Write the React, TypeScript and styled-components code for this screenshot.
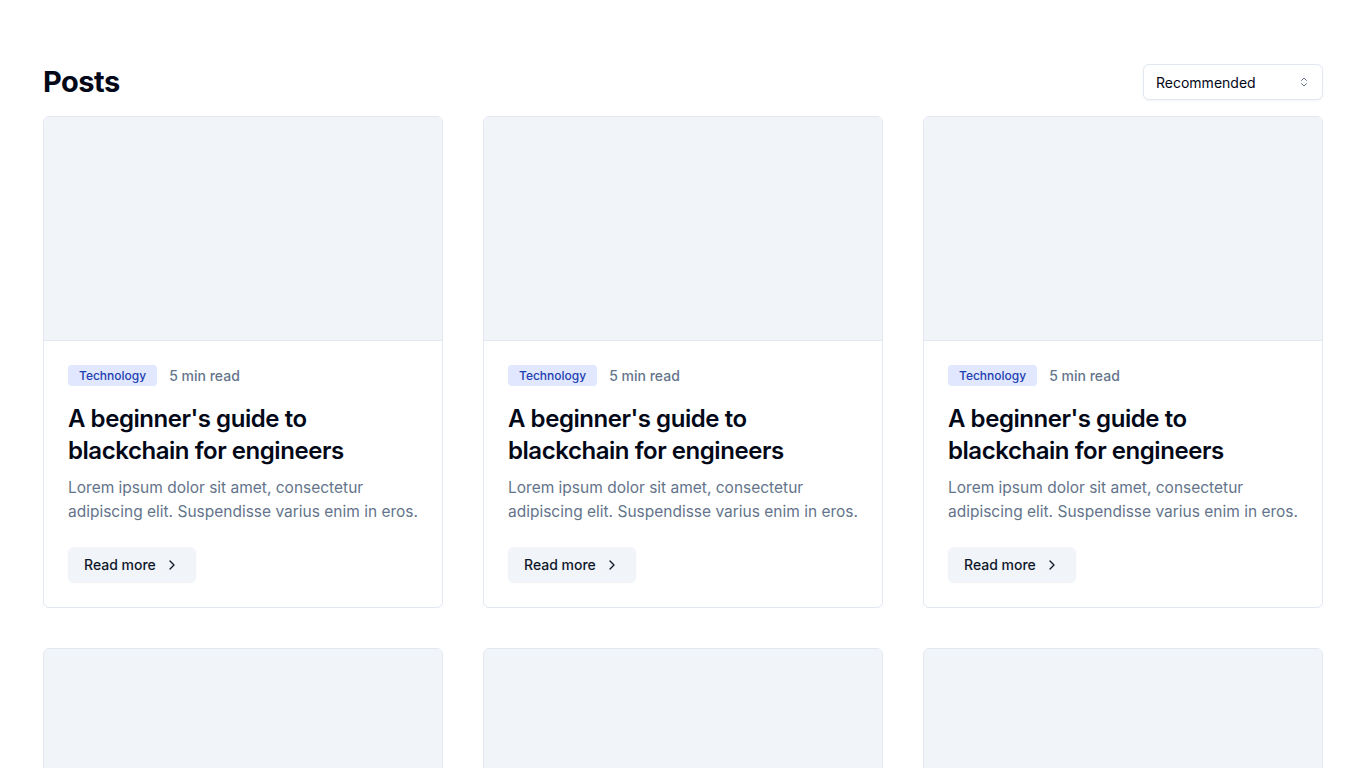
import React from "react";
import styled, { createGlobalStyle } from "styled-components";

const Global = createGlobalStyle`
  * { box-sizing: border-box; }
  body { margin: 0; background: #ffffff; font-family: Inter, "Noto Sans", sans-serif; color: #020817; }
`;

const Page = styled.main`
  padding: 64px 43px 0;
`;

const Header = styled.header`
  display: flex;
  align-items: center;
  justify-content: space-between;
  margin-bottom: 16px;
`;

const Title = styled.h1`
  margin: 0;
  font-size: 29px;
  line-height: 36px;
  font-weight: 700;
  letter-spacing: -0.5px;
  color: #020817;
`;

const Select = styled.button`
  width: 180px;
  height: 36px;
  display: flex;
  align-items: center;
  justify-content: space-between;
  padding: 0 12px;
  background: #fff;
  border: 1px solid #e2e8f0;
  border-radius: 6px;
  box-shadow: 0 1px 2px rgba(15, 23, 42, 0.05);
  font-family: inherit;
  font-size: 14px;
  color: #020817;
`;

const Grid = styled.section`
  display: grid;
  grid-template-columns: repeat(3, 400px);
  column-gap: 40px;
  row-gap: 40px;
`;

const Card = styled.article`
  border: 1px solid #e2e8f0;
  border-radius: 6px;
  overflow: hidden;
  background: #fff;
`;

const Cover = styled.div`
  height: 224px;
  background: #f1f5f9;
  border-bottom: 1px solid #e2e8f0;
`;

const Body = styled.div`
  padding: 24px 24px 25px;
  display: flex;
  flex-direction: column;
`;

const Meta = styled.div`
  display: flex;
  align-items: center;
  gap: 12px;
  margin-bottom: 17px;
`;

const Badge = styled.span`
  background: #e0e7ff;
  color: #1e40af;
  font-size: 12px;
  font-weight: 500;
  line-height: 16px;
  padding: 3px 11px 2px;
  border-radius: 4px;
`;

const ReadTime = styled.span`
  font-size: 14px;
  font-weight: 500;
  color: #64748b;
`;

const PostTitle = styled.h2`
  margin: 0 0 9px;
  font-size: 24px;
  line-height: 32px;
  font-weight: 600;
  color: #020817;
  letter-spacing: -0.45px;
`;

const Desc = styled.p`
  margin: 0 0 23px;
  font-size: 15.5px;
  line-height: 24px;
  color: #64748b;
`;

const ReadMore = styled.button`
  align-self: flex-start;
  display: inline-flex;
  align-items: center;
  gap: 8px;
  height: 35px;
  padding: 0 16px;
  background: #f1f5f9;
  border: none;
  border-radius: 6px;
  box-shadow: 0 1px 2px rgba(15, 23, 42, 0.06);
  font-family: inherit;
  font-size: 14px;
  font-weight: 500;
  color: #0f172a;
`;

const Chevron = () => (
  <svg width="16" height="16" viewBox="0 0 24 24" fill="none" stroke="currentColor" strokeWidth="2" strokeLinecap="round" strokeLinejoin="round">
    <path d="m9 18 6-6-6-6" />
  </svg>
);

const UpDown = () => (
  <svg width="12" height="12" viewBox="0 0 24 24" fill="none" stroke="#64748b" strokeWidth="2" strokeLinecap="round" strokeLinejoin="round">
    <path d="m7 15 5 5 5-5" />
    <path d="m7 9 5-5 5 5" />
  </svg>
);

const posts = Array.from({ length: 6 }, (_, i) => i);

export default function App() {
  return (
    <>
      <Global />
      <Page>
        <Header>
          <Title>Posts</Title>
          <Select>
            <span>Recommended</span>
            <UpDown />
          </Select>
        </Header>
        <Grid>
          {posts.map((i) => (
            <Card key={i}>
              <Cover />
              <Body>
                <Meta>
                  <Badge>Technology</Badge>
                  <ReadTime>5 min read</ReadTime>
                </Meta>
                <PostTitle>A beginner's guide to blackchain for engineers</PostTitle>
                <Desc>Lorem ipsum dolor sit amet, consectetur adipiscing elit. Suspendisse varius enim in eros.</Desc>
                <ReadMore>
                  Read more
                  <Chevron />
                </ReadMore>
              </Body>
            </Card>
          ))}
        </Grid>
      </Page>
    </>
  );
}
